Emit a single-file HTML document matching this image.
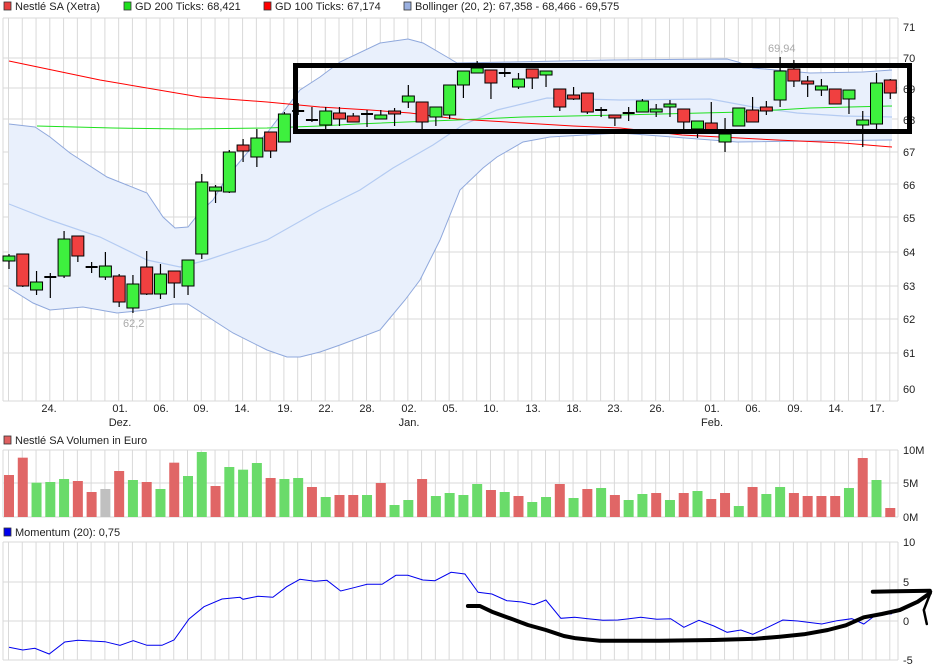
<!DOCTYPE html>
<html><head><meta charset="utf-8"><style>
html,body{margin:0;padding:0;background:#fff;width:940px;height:670px;overflow:hidden}
svg{display:block;font-family:"Liberation Sans",sans-serif}
</style></head><body>
<svg id="s" width="940" height="670" xmlns="http://www.w3.org/2000/svg"></svg>
<script>
var s=document.getElementById('s');var h='';
function X(i){return 9+i*13.77;}
h+='<rect x="4" y="2" width="7" height="8" fill="#e84040" stroke="#333" stroke-width="0.8"/><text x="15" y="10" font-size="11" fill="#222">Nestlé SA (Xetra)</text>';
h+='<rect x="124" y="2" width="7" height="8" fill="#1ee01e" stroke="#333" stroke-width="0.8"/><text x="135" y="10" font-size="11" fill="#222">GD 200 Ticks: 68,421</text>';
h+='<rect x="264" y="2" width="7" height="8" fill="#f00" stroke="#333" stroke-width="0.8"/><text x="275" y="10" font-size="11" fill="#222">GD 100 Ticks: 67,174</text>';
h+='<rect x="404" y="2" width="7" height="8" fill="#9ab0e0" stroke="#333" stroke-width="0.8"/><text x="415" y="10" font-size="11" fill="#222">Bollinger (20, 2): 67,358 - 68,466 - 69,575</text>';
h+='<rect x="4" y="436" width="7" height="8" fill="#e06060" stroke="#333" stroke-width="0.8"/><text x="15" y="444" font-size="11" fill="#222">Nestlé SA Volumen in Euro</text>';
h+='<rect x="4" y="528" width="7" height="8" fill="#0000ee" stroke="#333" stroke-width="0.8"/><text x="15" y="536" font-size="11" fill="#222">Momentum (20): 0,75</text>';
var g='#d9d9d9';
function vgrid(y1,y2){for(var i=0;i<66;i++){var x=X(i)-0.5;if(x<898)h+='<line x1="'+x+'" y1="'+y1+'" x2="'+x+'" y2="'+y2+'" stroke="'+g+'"/>';}
 h+='<line x1="3" y1="'+y1+'" x2="3" y2="'+y2+'" stroke="'+g+'"/><line x1="898" y1="'+y1+'" x2="898" y2="'+y2+'" stroke="'+g+'"/>';}
vgrid(18,401);
[18,58,88,119,152,184,217,252,286,319,353,401].forEach(function(y){h+='<line x1="3" y1="'+y+'" x2="898" y2="'+y+'" stroke="'+g+'"/>';});
var pl=[[71,27],[70,58],[69,89],[68,120],[67,152],[66,185],[65,218],[64,252],[63,286],[62,319],[61,353],[60,389]];
pl.forEach(function(p){h+='<text x="903" y="'+(p[1]+4)+'" font-size="11" fill="#222">'+p[0]+'</text>';});
var up=[[9,124],[35,127],[50,137],[70,153],[107,177],[147,193],[163,217],[175,228],[188,227],[200,212],[213,200],[227,177],[247,153],[267,133],[287,107],[300,90],[320,77],[340,62],[380,43],[408,39],[423,43],[447,57],[457,63],[512,62],[610,60],[727,59],[738,62],[753,68],[810,73],[863,72],[892,70]];
var lo=[[892,140],[737,142],[620,133],[550,137],[523,142],[497,157],[483,168],[460,190],[440,240],[420,280],[405,300],[380,330],[340,345],[320,352],[300,357],[287,357],[267,350],[233,333],[188,304],[173,304],[147,310],[117,313],[83,307],[50,310],[33,303],[9,288]];
function pts(a){return a.map(function(p){return p[0]+','+p[1]}).join(' ');}
h+='<polygon points="'+pts(up.concat(lo))+'" fill="#e9f0fc"/>';
h+='<polyline points="'+pts(up)+'" fill="none" stroke="#8fa8dc" stroke-width="1"/>';
h+='<polyline points="'+pts(lo)+'" fill="none" stroke="#8fa8dc" stroke-width="1"/>';
var mid=[[9,204],[50,220],[100,237],[147,260],[180,267],[207,260],[267,240],[320,210],[360,190],[393,168],[433,145],[463,125],[497,110],[547,98],[620,100],[710,99],[753,107],[797,113],[843,116],[892,117]];
h+='<polyline points="'+pts(mid)+'" fill="none" stroke="#b4cbf2" stroke-width="1.2"/>';
var red=[[9,61],[100,80],[200,97],[267,102],[320,107],[370,110],[410,113],[457,119],[523,123],[573,126],[620,128],[682,135],[777,140],[843,143],[892,147]];
h+='<polyline points="'+pts(red)+'" fill="none" stroke="#f00" stroke-width="1"/>';
var grn=[[37,126],[113,128],[187,129],[267,128],[320,126],[357,124],[457,120],[523,117],[620,115],[743,112],[810,108],[892,106]];
h+='<polyline points="'+pts(grn)+'" fill="none" stroke="#1ee01e" stroke-width="1"/>';
var C=[[256,261,254,269,'g'],[254,286,254,287,'r'],[282,290,271,295,'g'],[277,277,273,298,'d'],[239,276,231,278,'g'],[236,256,236,262,'r'],[267,267,262,273,'d'],[266,277,252,280,'g'],[276,302,274,307,'r'],[284,308,275,313,'g'],[267,294,251,295,'r'],[274,294,264,299,'g'],[271,283,271,298,'r'],[260,286,260,295,'g'],[182,254,174,259,'g'],[187,191,185,203,'g'],[152,192,150,193,'g'],[145,151,139,162,'r'],[138,157,129,167,'g'],[132,151,132,158,'r'],[114,142,112,142,'g'],[111,111,103,115,'d'],[120,120,107,122,'d'],
[111,125,107,129,'g'],[113,119,107,126,'r'],[116,122,113,122,'r'],[114,114,110,127,'d'],[115,119,110,119,'g'],[111,113,108,126,'r'],[96,102,85,108,'g'],[102,122,102,130,'r'],[107,117,107,126,'g'],[85,115,85,119,'g'],[71,85,71,98,'g'],[68,73,61,73,'g'],[70,83,70,99,'r'],[73,73,67,77,'d'],[79,87,73,89,'g'],[69,78,69,89,'r'],[71,75,71,87,'g'],[89,107,89,111,'r'],[95,99,87,100,'r'],[93,112,93,114,'r'],[110,110,107,117,'d'],[115,118,115,126,'r'],
[113,113,107,121,'d'],[101,112,99,112,'g'],[109,112,104,117,'g'],[104,107,100,117,'g'],[109,122,109,130,'r'],[121,129,121,138,'g'],[123,130,102,130,'r'],[134,142,118,152,'g'],[108,126,108,126,'g'],[110,122,97,122,'r'],[107,111,101,115,'r'],[71,100,57,107,'g'],[69,81,60,87,'r'],[81,83,76,97,'r'],[86,90,79,96,'g'],[89,104,89,104,'r'],[90,99,90,114,'g'],[120,125,111,147,'g'],[83,124,73,130,'g'],[80,93,79,99,'r']];
C.forEach(function(c,i){var x=X(i);
 h+='<line x1="'+x+'" y1="'+c[2]+'" x2="'+x+'" y2="'+c[3]+'" stroke="#000" stroke-width="1.2"/>';
 if(c[4]=='d'){h+='<line x1="'+(x-6)+'" y1="'+c[0]+'" x2="'+(x+6)+'" y2="'+c[0]+'" stroke="#000" stroke-width="2"/>';}
 else{var hh=Math.max(c[1]-c[0],3);h+='<rect x="'+(x-6)+'" y="'+c[0]+'" width="12" height="'+hh+'" fill="'+(c[4]=='g'?'#3ef03e':'#f04040')+'" stroke="#000" stroke-width="1"/>';}
});
h+='<text x="123" y="327" font-size="11" fill="#aaa">62,2</text><text x="768" y="52" font-size="11" fill="#aaa">69,94</text>';
h+='<rect x="295.5" y="65.5" width="614" height="66" fill="none" stroke="#000" stroke-width="5"/>';
var d=[['24.',49],['01.',120],['06.',161],['09.',201],['14.',242],['19.',285],['22.',326],['28.',367],['02.',409],['05.',450],['10.',491],['13.',533],['18.',574],['23.',615],['26.',657],['01.',712],['06.',753],['09.',795],['14.',836],['17.',877]];
d.forEach(function(a){h+='<text x="'+a[1]+'" y="412" font-size="11" fill="#222" text-anchor="middle">'+a[0]+'</text>';});
h+='<text x="120" y="426" font-size="11" fill="#222" text-anchor="middle">Dez.</text><text x="409" y="426" font-size="11" fill="#222" text-anchor="middle">Jan.</text><text x="712" y="426" font-size="11" fill="#222" text-anchor="middle">Feb.</text>';
vgrid(450,517);
[450,483,517].forEach(function(y){h+='<line x1="3" y1="'+y+'" x2="898" y2="'+y+'" stroke="'+g+'"/>';});
h+='<text x="903" y="454" font-size="11" fill="#222">10M</text><text x="903" y="487" font-size="11" fill="#222">5M</text><text x="903" y="521" font-size="11" fill="#222">0M</text>';
var V=[[285,'r'],[233,'r'],[308,'g'],[306,'g'],[297,'g'],[303,'r'],[336,'r'],[327,'k'],[273,'r'],[300,'g'],[306,'r'],[327,'g'],[248,'r'],[288,'g'],[216,'g'],[318,'r'],[261,'g'],[269,'g'],[249,'g'],[294,'r'],[297,'g'],[294,'g'],[321,'r'],[351,'g'],[345,'r'],[345,'r'],[345,'g'],[309,'r'],[375,'g'],[360,'g'],[297,'r'],[348,'g'],[339,'g'],[345,'g'],[312,'g'],[330,'r'],[336,'g'],[348,'r'],[366,'g'],[351,'g'],[312,'r'],[354,'g'],[327,'r'],[324,'g'],[345,'r'],[360,'g'],[342,'g'],[339,'r'],[360,'g'],[339,'r'],[333,'g'],[357,'r'],[339,'r'],[378,'g'],[321,'r'],[342,'g'],[321,'g'],[339,'r'],[348,'r'],[348,'r'],[348,'r'],[324,'g'],[234,'r'],[300,'g'],[384,'r']];
V.forEach(function(v,i){var x=X(i),t=380+v[0]/3;var x0=Math.max(x-5,3);h+='<rect x="'+x0+'" y="'+t+'" width="'+(x+5-x0)+'" height="'+(517-t)+'" fill="'+(v[1]=='r'?'#e06666':v[1]=='g'?'#6adb6a':'#c0c0c0')+'"/>';});
vgrid(542,660);
[542,582,621,660].forEach(function(y){h+='<line x1="3" y1="'+y+'" x2="898" y2="'+y+'" stroke="'+g+'"/>';});
h+='<text x="903" y="546" font-size="11" fill="#222">10</text><text x="903" y="586" font-size="11" fill="#222">5</text><text x="903" y="625" font-size="11" fill="#222">0</text><text x="903" y="664" font-size="11" fill="#222">-5</text>';
var K=1.667;
var M=[[15,382],[38,390],[58,385],[82,402],[108,366],[130,361],[175,365],[200,376],[222,362],[245,376],[270,376],[290,360],[315,297],[340,260],[370,237],[400,232],[405,238],[430,229],[455,232],[478,200],[500,178],[525,184],[545,181],[568,213],[590,203],[612,193],[637,193],[660,166],[680,166],[705,180],[725,182],[752,157],[775,162],[797,217],[820,222],[845,242],[870,246],[890,254],[910,240],[935,295],[958,292],[980,296],[1005,301],[1030,300],[1045,297],[1068,292],[1095,298],[1118,296],[1140,322],[1165,301],[1190,318],[1212,337],[1235,330],[1255,343],[1280,322],[1305,300],[1330,303],[1370,312],[1395,302],[1420,296],[1440,312],[1460,285],[1487,281]];
function bp(a){return a.map(function(p){return (p[0]/K).toFixed(1)+','+(520+p[1]/3).toFixed(1)}).join(' ');}
h+='<polyline points="'+bp(M)+'" fill="none" stroke="#0000ee" stroke-width="1"/>';
var B=[[780,258],[800,258],[820,275],[850,295],[880,315],[910,330],[940,348],[960,355],[1000,362],[1100,362],[1190,360],[1260,356],[1300,350],[1340,343],[1380,330],[1410,316],[1440,292],[1470,282],[1500,270],[1530,245],[1550,220]];
h+='<polyline points="'+bp(B)+'" fill="none" stroke="#000" stroke-width="4" stroke-linejoin="round" stroke-linecap="round"/>';
h+='<polyline points="'+bp([[1455,215],[1550,212]])+'" fill="none" stroke="#000" stroke-width="4" stroke-linecap="round"/>';
h+='<polyline points="'+bp([[1552,215],[1540,270],[1545,312]])+'" fill="none" stroke="#000" stroke-width="2.5" stroke-linecap="round"/>';
s.innerHTML=h;
</script>
</body></html>
